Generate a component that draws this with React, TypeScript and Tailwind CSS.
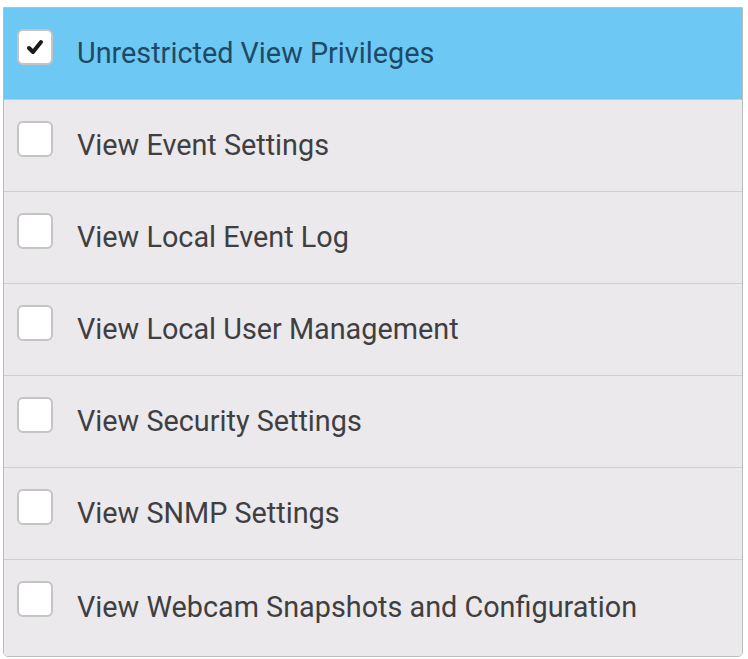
import * as React from "react";

interface IPrivilegeRow {
    label: string;
    checked?: boolean;
}

const PRIVILEGES: IPrivilegeRow[] = [
    { label: "Unrestricted View Privileges", checked: true },
    { label: "View Event Settings" },
    { label: "View Local Event Log" },
    { label: "View Local User Management" },
    { label: "View Security Settings" },
    { label: "View SNMP Settings" },
    { label: "View Webcam Snapshots and Configuration" },
];

const PrivilegeRow = ({ label, checked }: IPrivilegeRow) => {
    return (
        <div
            className={
                checked
                    ? "flex h-[92px] border-b border-[#c9c9cb] bg-[#6dc9f3]"
                    : "flex h-[92px] border-b border-[#cfcfd1] bg-[#ebe9ec] last:h-[96px] last:border-b-0"
            }
        >
            {/* checkbox sits a bit above the text line */}
            <div className="ml-[13px] mt-[21px] flex h-[36px] w-[36px] items-center justify-center rounded-[6px] border-2 border-[#c4c4c4] bg-white">
                {checked && (
                    <svg width="20" height="18" viewBox="0 0 20 18">
                        <path
                            d="M4 10 L8 14 L16 4"
                            fill="none"
                            stroke="#1a1a1a"
                            strokeWidth="4"
                            strokeLinecap="round"
                            strokeLinejoin="round"
                        />
                    </svg>
                )}
            </div>
            <p
                className={
                    checked
                        ? "ml-[24px] self-center text-[28.8px] text-[#1e4a68]"
                        : "ml-[24px] self-center text-[28.8px] text-[#3f3f42]"
                }
            >
                {label}
            </p>
        </div>
    );
};

export default function App() {
    return (
        <div className="h-[659px] w-[748px] bg-white pl-[3px] pt-[7px] font-['Roboto',sans-serif]">
            <div className="w-[740px] overflow-hidden rounded-b-[5px] border border-[#bdbdbf]">
                {PRIVILEGES.map((p) => (
                    <PrivilegeRow key={p.label} label={p.label} checked={p.checked} />
                ))}
            </div>
        </div>
    );
}
